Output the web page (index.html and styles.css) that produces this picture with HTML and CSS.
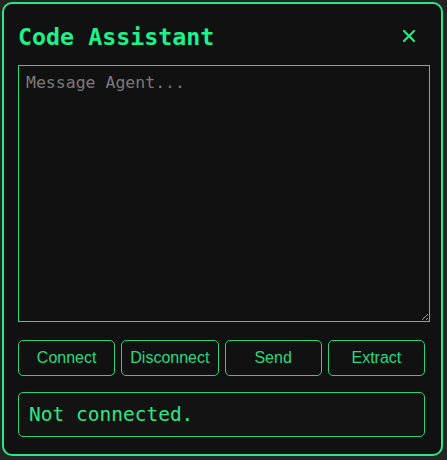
FILE: index.html
```html
<!DOCTYPE html>
<html>
<head>
<meta charset="utf-8">
<link rel="stylesheet" href="styles.css">
</head>
<body>
<div class="panel">
  <div class="header">
    <h1 class="title">Code Assistant</h1>
    <button class="close" aria-label="Close">
      <svg width="12" height="12" viewBox="0 0 12 12"><path d="M1 1L11 11M11 1L1 11" stroke="currentColor" stroke-width="2" stroke-linecap="square"/></svg>
    </button>
  </div>
  <div class="input-wrap">
    <textarea class="input" placeholder="Message Agent..."></textarea>
  </div>
  <div class="actions">
    <button class="btn">Connect</button>
    <button class="btn">Disconnect</button>
    <button class="btn">Send</button>
    <button class="btn">Extract</button>
  </div>
  <div class="status">Not connected.</div>
</div>
</body>
</html>
```
FILE: styles.css
```css
html, body {
  margin: 0;
  padding: 0;
  background: #242424;
}
body {
  padding: 2px 0 0 2px;
}
.panel {
  box-sizing: border-box;
  width: 441px;
  height: 454px;
  background: #111111;
  border: 2px solid #2ee68a;
  border-radius: 10px;
  padding: 14px 15px 0 14px;
  display: flex;
  flex-direction: column;
}
.header {
  display: flex;
  align-items: center;
  justify-content: space-between;
  height: 35px;
  margin-bottom: 12px;
}
.title {
  margin: 0;
  font-family: "DejaVu Sans Mono", monospace;
  font-weight: bold;
  font-size: 23.3px;
  color: #1ef08c;
  line-height: 1;
  padding-top: 3px;
}
.close {
  background: none;
  border: none;
  color: #1ef08c;
  padding: 0;
  margin-right: 11px;
  margin-top: 0;
  width: 12px;
  height: 12px;
  display: flex;
}
.input-wrap {
  box-sizing: border-box;
  width: 412px;
  height: 257px;
  border: 1px solid #22e080;
  background: #111111;
  display: flex;
}
.input {
  -webkit-appearance: none;
  appearance: none;
  box-sizing: border-box;
  flex: 1;
  width: 100%;
  height: 100%;
  margin: 0;
  background: transparent;
  border: 0 none transparent;
  border-radius: 0;
  padding: 7px 7px;
  color: #ddd;
  font-family: "DejaVu Sans Mono", monospace;
  font-size: 16.5px;
  outline: none;
}
.input::placeholder {
  color: #7a7a7a;
}
.actions {
  display: flex;
  gap: 6px;
  margin-top: 18px;
  width: 407px;
}
.btn {
  flex: 1;
  height: 36px;
  padding: 0 8px;
  background: #111111;
  border: 1px solid #2ad27d;
  border-radius: 5px;
  color: #2ad880;
  font-family: "Liberation Sans", Arial, sans-serif;
  font-size: 16px;
  white-space: nowrap;
}
.status {
  box-sizing: border-box;
  width: 407px;
  height: 45px;
  margin-top: 16px;
  border: 1px solid #2ad27d;
  border-radius: 5px;
  background: #131313;
  padding: 0 10px;
  display: flex;
  align-items: center;
  color: #2ee68a;
  font-family: "DejaVu Sans Mono", monospace;
  font-size: 19.5px;
}
```
